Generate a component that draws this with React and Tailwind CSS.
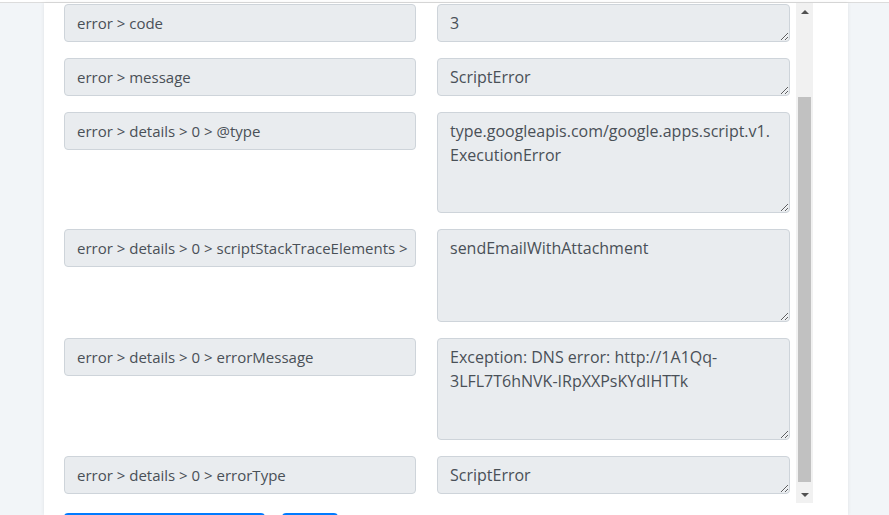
const FIELDS = [
	{ label: "error > code", value: "3", h: "h-[38px]" },
	{ label: "error > message", value: "ScriptError", h: "h-[38px]" },
	{
		label: "error > details > 0 > @type",
		value: "type.googleapis.com/google.apps.script.v1.\nExecutionError",
		h: "h-[101px]",
	},
	{
		label: "error > details > 0 > scriptStackTraceElements >",
		value: "sendEmailWithAttachment",
		h: "h-[93px]",
	},
	{
		label: "error > details > 0 > errorMessage",
		value: "Exception: DNS error: http://1A1Qq-\n3LFL7T6hNVK-IRpXXPsKYdIHTTk",
		h: "h-[102px]",
	},
	{ label: "error > details > 0 > errorType", value: "ScriptError", h: "h-[38px]" },
];

const ScrollBar = () => (
	<div className="w-[17px] shrink-0 bg-[#f1f1f1] flex flex-col items-center">
		<div className="h-[17px] flex items-center justify-center">
			<div className="w-0 h-0 border-l-[4px] border-r-[4px] border-b-[4px] border-l-transparent border-r-transparent border-b-[#505050]" />
		</div>
		<div className="flex-1 w-full px-[2px] pt-[77px] pb-[4px]">
			<div className="h-full bg-[#c1c1c1]" />
		</div>
		<div className="h-[17px] flex items-center justify-center">
			<div className="w-0 h-0 border-l-[4px] border-r-[4px] border-t-[4px] border-l-transparent border-r-transparent border-t-[#505050]" />
		</div>
	</div>
);

const App = () => {
	return (
		<div
			className="h-[515px] overflow-hidden bg-[#f2f5f8] text-[#495057]"
			style={{ fontFamily: '"Open Sans", "Noto Sans", sans-serif' }}
		>
			<div className="h-[3px] bg-white border-b border-[#dcdcdc]" />
			<div className="flex h-[512px]">
				<div className="w-[44px] shrink-0" />
				<div className="w-[804px] shrink-0 bg-white shadow-[0_0_4px_rgba(0,0,0,0.08)] pl-[20px] pr-[35px]">
					<div className="flex h-[500px] overflow-hidden">
						<div className="w-[732px] pt-[1px]">
							{FIELDS.map((f) => (
								<div key={f.label} className="flex gap-[21px] mb-[16px]">
									<div className="w-[352px] h-[38px] shrink-0 bg-[#e9ecef] border border-[#ced4da] rounded-[4px] px-[12px] flex items-center text-[15px] whitespace-nowrap">
										{f.label}
									</div>
									<textarea
										readOnly
										defaultValue={f.value}
										className={`w-[353px] ${f.h} shrink-0 bg-[#e9ecef] border border-[#ced4da] rounded-[4px] px-[12px] py-[6px] text-[16px] leading-[24px] text-[#495057] outline-none`}
									/>
								</div>
							))}
						</div>
						<ScrollBar />
					</div>
					<div className="flex gap-[17px] mt-[10px]">
						<button className="w-[201px] h-[38px] bg-[#007bff] rounded-[4px]" />
						<button className="w-[56px] h-[38px] bg-[#007bff] rounded-[4px]" />
					</div>
				</div>
				<div className="flex-1" />
			</div>
		</div>
	);
};

export default App;
